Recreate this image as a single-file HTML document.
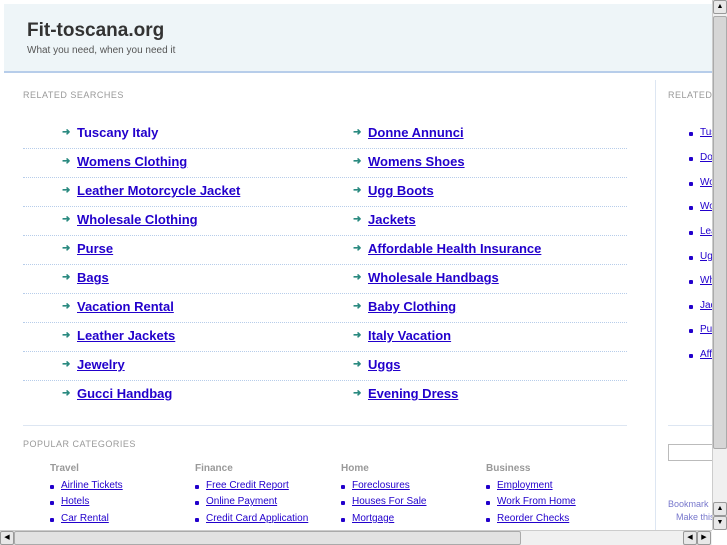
<!DOCTYPE html>
<html><head><style>
*{margin:0;padding:0;box-sizing:border-box}
body{width:727px;height:545px;overflow:hidden;position:relative;background:#fff;font-family:"Liberation Sans",Arial,sans-serif}
.hdr{position:absolute;left:4px;top:4px;width:708px;height:69px;background:#eef5f8;border-bottom:2px solid #b7cdea}
.hdr h1{position:absolute;left:23px;top:16px;font-size:19px;color:#333;font-weight:bold}
.hdr p{position:absolute;left:23px;top:41px;font-size:10px;color:#555}
.lbl{position:absolute;font-size:9px;color:#999;letter-spacing:.5px}
.row{position:absolute;left:23px;width:604px;height:29px;border-bottom:1px dotted #b7cdea}
.lk{position:absolute;font-size:13px;font-weight:bold;color:#2200cc;text-decoration:underline}
.ar{position:absolute;color:#2a8a80;font-size:10px;font-weight:bold}
.vd{position:absolute;left:655px;top:80px;width:1px;height:450px;background:#dde6f2}
.sm{position:absolute;font-size:10px;color:#2200cc;text-decoration:underline}
.bu{position:absolute;width:4px;height:4px;background:#2200cc;border-radius:1px}
.ch{position:absolute;font-size:10px;font-weight:bold;color:#999}
.vs{position:absolute;left:712px;top:0;width:15px;height:530px;background:#f0f0f0;border-left:1px solid #ccc}
.th{position:absolute;left:713px;top:16px;width:14px;height:433px;background:#d6d6d6;border:1px solid #aaa;border-radius:2px}
.hs{position:absolute;left:0;top:530px;width:712px;height:15px;background:#f0f0f0;border-top:1px solid #ccc}
.hth{position:absolute;left:14px;top:531px;width:507px;height:14px;background:#e2e2e2;border:1px solid #aaa;border-radius:2px}
.btn{position:absolute;width:14px;height:14px;background:#e8e8e8;border:1px solid #999;border-radius:2px;font-size:7px;text-align:center;line-height:12px;color:#000}
</style></head><body>
<div class="hdr"><h1>Fit-toscana.org</h1><p>What you need, when you need it</p></div>
<div class="lbl" style="left:23px;top:90px">RELATED SEARCHES</div>
<div class="lbl" style="left:668px;top:90px">RELATED</div>
<div class="vd"></div>

<div class="row" style="top:120px"></div><div class="row" style="top:149px"></div><div class="row" style="top:178px"></div><div class="row" style="top:207px"></div><div class="row" style="top:236px"></div><div class="row" style="top:265px"></div><div class="row" style="top:294px"></div><div class="row" style="top:323px"></div><div class="row" style="top:352px"></div><div class="row" style="top:381px;border-bottom:none"></div>

<span class="ar" style="left:62px;top:127px">➜</span><a class="lk" style="left:77px;top:125px;text-decoration:none">Tuscany Italy</a>
<span class="ar" style="left:62px;top:156px">➜</span><a class="lk" style="left:77px;top:154px">Womens Clothing</a>
<span class="ar" style="left:62px;top:185px">➜</span><a class="lk" style="left:77px;top:183px">Leather Motorcycle Jacket</a>
<span class="ar" style="left:62px;top:214px">➜</span><a class="lk" style="left:77px;top:212px">Wholesale Clothing</a>
<span class="ar" style="left:62px;top:243px">➜</span><a class="lk" style="left:77px;top:241px">Purse</a>
<span class="ar" style="left:62px;top:272px">➜</span><a class="lk" style="left:77px;top:270px">Bags</a>
<span class="ar" style="left:62px;top:301px">➜</span><a class="lk" style="left:77px;top:299px">Vacation Rental</a>
<span class="ar" style="left:62px;top:330px">➜</span><a class="lk" style="left:77px;top:328px">Leather Jackets</a>
<span class="ar" style="left:62px;top:359px">➜</span><a class="lk" style="left:77px;top:357px">Jewelry</a>
<span class="ar" style="left:62px;top:388px">➜</span><a class="lk" style="left:77px;top:386px">Gucci Handbag</a>

<span class="ar" style="left:353px;top:127px">➜</span><a class="lk" style="left:368px;top:125px">Donne Annunci</a>
<span class="ar" style="left:353px;top:156px">➜</span><a class="lk" style="left:368px;top:154px">Womens Shoes</a>
<span class="ar" style="left:353px;top:185px">➜</span><a class="lk" style="left:368px;top:183px">Ugg Boots</a>
<span class="ar" style="left:353px;top:214px">➜</span><a class="lk" style="left:368px;top:212px">Jackets</a>
<span class="ar" style="left:353px;top:243px">➜</span><a class="lk" style="left:368px;top:241px">Affordable Health Insurance</a>
<span class="ar" style="left:353px;top:272px">➜</span><a class="lk" style="left:368px;top:270px">Wholesale Handbags</a>
<span class="ar" style="left:353px;top:301px">➜</span><a class="lk" style="left:368px;top:299px">Baby Clothing</a>
<span class="ar" style="left:353px;top:330px">➜</span><a class="lk" style="left:368px;top:328px">Italy Vacation</a>
<span class="ar" style="left:353px;top:359px">➜</span><a class="lk" style="left:368px;top:357px">Uggs</a>
<span class="ar" style="left:353px;top:388px">➜</span><a class="lk" style="left:368px;top:386px">Evening Dress</a>

<div style="position:absolute;left:23px;top:425px;width:604px;height:1px;background:#dde6f2"></div>
<div style="position:absolute;left:668px;top:425px;width:50px;height:1px;background:#dde6f2"></div>
<div class="lbl" style="left:23px;top:439px">POPULAR CATEGORIES</div>

<div class="ch" style="left:50px;top:463px">Travel</div><div class="ch" style="left:195px;top:463px">Finance</div><div class="ch" style="left:341px;top:463px">Home</div><div class="ch" style="left:486px;top:463px">Business</div>
<div class="bu" style="left:50px;top:485px"></div><a class="sm" style="left:61px;top:480px">Airline Tickets</a>
<div class="bu" style="left:50px;top:501px"></div><a class="sm" style="left:61px;top:496px">Hotels</a>
<div class="bu" style="left:50px;top:518px"></div><a class="sm" style="left:61px;top:513px">Car Rental</a>
<div class="bu" style="left:195px;top:485px"></div><a class="sm" style="left:206px;top:480px">Free Credit Report</a>
<div class="bu" style="left:195px;top:501px"></div><a class="sm" style="left:206px;top:496px">Online Payment</a>
<div class="bu" style="left:195px;top:518px"></div><a class="sm" style="left:206px;top:513px">Credit Card Application</a>
<div class="bu" style="left:341px;top:485px"></div><a class="sm" style="left:352px;top:480px">Foreclosures</a>
<div class="bu" style="left:341px;top:501px"></div><a class="sm" style="left:352px;top:496px">Houses For Sale</a>
<div class="bu" style="left:341px;top:518px"></div><a class="sm" style="left:352px;top:513px">Mortgage</a>
<div class="bu" style="left:486px;top:485px"></div><a class="sm" style="left:497px;top:480px">Employment</a>
<div class="bu" style="left:486px;top:501px"></div><a class="sm" style="left:497px;top:496px">Work From Home</a>
<div class="bu" style="left:486px;top:518px"></div><a class="sm" style="left:497px;top:513px">Reorder Checks</a>

<div class="bu" style="left:689px;top:132px"></div><a class="sm" style="left:700px;top:127px">Tuscany</a>
<div class="bu" style="left:689px;top:157px"></div><a class="sm" style="left:700px;top:152px">Donne</a>
<div class="bu" style="left:689px;top:182px"></div><a class="sm" style="left:700px;top:177px">Womens</a>
<div class="bu" style="left:689px;top:206px"></div><a class="sm" style="left:700px;top:201px">Womens</a>
<div class="bu" style="left:689px;top:231px"></div><a class="sm" style="left:700px;top:226px">Leather</a>
<div class="bu" style="left:689px;top:256px"></div><a class="sm" style="left:700px;top:251px">Ugg</a>
<div class="bu" style="left:689px;top:280px"></div><a class="sm" style="left:700px;top:275px">Wholesale</a>
<div class="bu" style="left:689px;top:305px"></div><a class="sm" style="left:700px;top:300px">Jackets</a>
<div class="bu" style="left:689px;top:329px"></div><a class="sm" style="left:700px;top:324px">Purse</a>
<div class="bu" style="left:689px;top:354px"></div><a class="sm" style="left:700px;top:349px">Affordable</a>
<div style="position:absolute;left:668px;top:444px;width:50px;height:17px;border:1px solid #bbb"></div>
<div style="position:absolute;left:668px;top:499px;font-size:9px;color:#7777cc">Bookmark</div>
<div style="position:absolute;left:676px;top:512px;font-size:9px;color:#7777cc">Make this</div>

<div class="vs"></div><div class="th"></div>
<div class="btn" style="left:713px;top:0">▲</div>
<div class="btn" style="left:713px;top:502px">▲</div><div class="btn" style="left:713px;top:516px">▼</div>
<div class="hs"></div><div class="hth"></div>
<div class="btn" style="left:0;top:531px">◀</div>
<div class="btn" style="left:683px;top:531px">◀</div><div class="btn" style="left:697px;top:531px">▶</div>
</body></html>
